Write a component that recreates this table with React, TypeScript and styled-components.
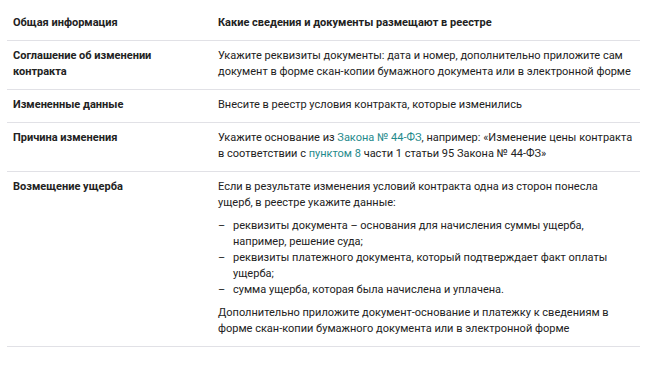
import React, { FC } from 'react';
import styled, { createGlobalStyle } from 'styled-components';

const GlobalStyle = createGlobalStyle`
  html, body {
    margin: 0;
    padding: 0;
    background: #ffffff;
  }
  body {
    font-family: Roboto, 'Liberation Sans', sans-serif;
    color: #222222;
  }
`;

const Page = styled.div`
  padding: 8px 14px 0 7px;
  width: 654px;
  box-sizing: border-box;
`;

const Table = styled.div`
  width: 633px;
`;

const Row = styled.div`
  display: grid;
  grid-template-columns: 205px 1fr;
  padding: 7px 0 9px;
  border-bottom: 1px solid #e1e1e6;
  font-size: 11px;
  line-height: 16px;
`;

const Title = styled.div`
  padding: 0 6px;
  font-weight: 700;
`;

const Cell = styled.div<{ bold?: boolean; narrow?: boolean }>`
  padding: 0 ${({ narrow }) => (narrow ? '12px' : '0')} 0 6px;
  font-weight: ${({ bold }) => (bold ? 700 : 400)};
`;

const Para = styled.p`
  margin: 0 0 7px;
  &:last-child {
    margin-bottom: 0;
  }
`;

const DashList = styled.ul`
  list-style: none;
  margin: 0 0 7px;
  padding: 0;
`;

const DashItem = styled.li`
  position: relative;
  padding-left: 15px;
  &::before {
    content: '–';
    position: absolute;
    left: 0;
    top: 0;
  }
`;

const Link = styled.a`
  color: #1f8a8c;
  text-decoration: none;
`;

const App: FC = () => (
  <>
    <GlobalStyle />
    <Page>
      <Table>
        <Row>
          <Title>Общая информация</Title>
          <Cell bold>Какие сведения и документы размещают в реестре</Cell>
        </Row>
        <Row>
          <Title>Соглашение об изменении контракта</Title>
          <Cell>
            Укажите реквизиты документы: дата и номер, дополнительно приложите сам документ в форме
            скан-копии бумажного документа или в электронной форме
          </Cell>
        </Row>
        <Row>
          <Title>Измененные данные</Title>
          <Cell>Внесите в реестр условия контракта, которые изменились</Cell>
        </Row>
        <Row>
          <Title>Причина изменения</Title>
          <Cell>
            Укажите основание из <Link href="#">Закона № 44-ФЗ</Link>, например: «Изменение цены
            контракта в соответствии с <Link href="#">пунктом 8</Link> части 1 статьи 95 Закона №
            44-ФЗ»
          </Cell>
        </Row>
        <Row>
          <Title>Возмещение ущерба</Title>
          <Cell narrow>
            <Para>
              Если в результате изменения условий контракта одна из сторон понесла ущерб, в реестре
              укажите данные:
            </Para>
            <DashList>
              <DashItem>
                реквизиты документа – основания для начисления суммы ущерба, например, решение суда;
              </DashItem>
              <DashItem>
                реквизиты платежного документа, который подтверждает факт оплаты ущерба;
              </DashItem>
              <DashItem>сумма ущерба, которая была начислена и уплачена.</DashItem>
            </DashList>
            <Para>
              Дополнительно приложите документ-основание и платежку к сведениям в форме скан-копии
              бумажного документа или в электронной форме
            </Para>
          </Cell>
        </Row>
      </Table>
    </Page>
  </>
);

export default App;
